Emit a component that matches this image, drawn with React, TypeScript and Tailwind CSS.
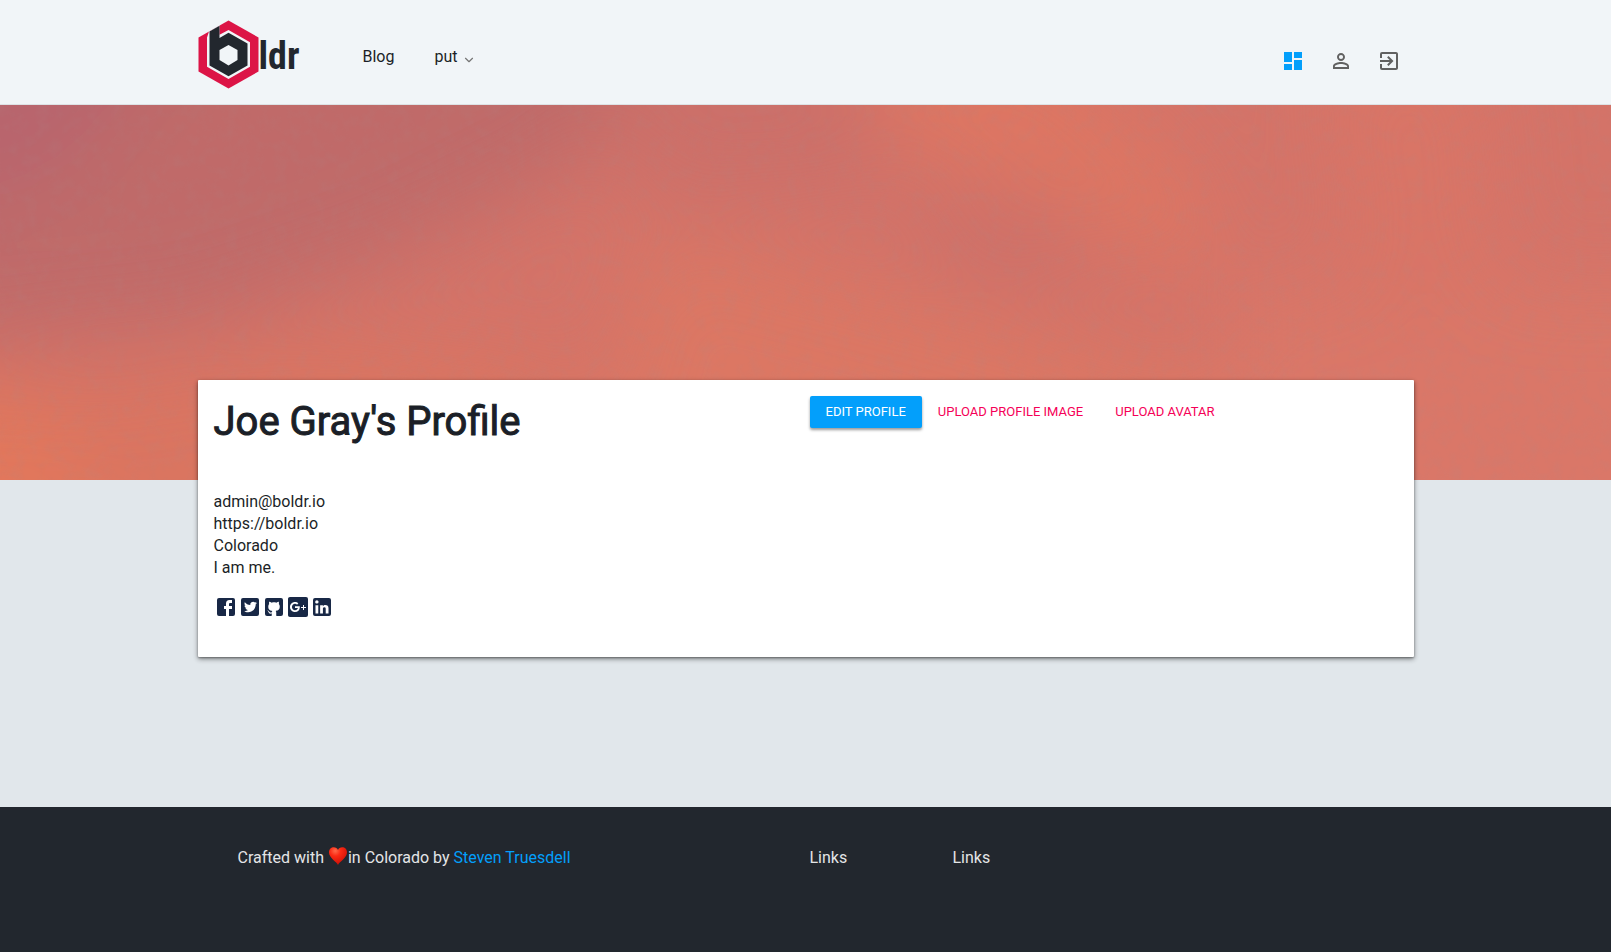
import React from 'react';
import { MdDashboard, MdPersonOutline, MdExitToApp } from 'react-icons/md';
import { ChevronDown } from 'lucide-react';

const socials = [
  {
    name: 'Facebook',
    href: '#facebook',
    path: 'M5,3H19A2,2 0 0,1 21,5V19A2,2 0 0,1 19,21H5A2,2 0 0,1 3,19V5A2,2 0 0,1 5,3M18,5H15.5A3.5,3.5 0 0,0 12,8.5V11H10V14H12V21H15V14H18V11H15V9A1,1 0 0,1 16,8H18V5Z',
  },
  {
    name: 'Twitter',
    href: '#twitter',
    path: 'M17.71,9.33C17.64,13.95 14.69,17.11 10.28,17.31C8.46,17.39 7.15,16.81 6,16.08C7.34,16.29 9,15.76 9.9,15C8.58,14.86 7.81,14.19 7.44,13.12C7.82,13.18 8.22,13.16 8.58,13.09C7.39,12.69 6.54,11.95 6.5,10.41C6.83,10.57 7.18,10.71 7.64,10.74C6.75,10.23 6.1,8.38 6.85,7.16C8.17,8.61 9.76,9.79 12.37,9.95C11.71,7.15 15.42,5.63 16.97,7.5C17.62,7.38 18.16,7.14 18.68,6.86C18.47,7.5 18.06,7.97 17.56,8.33C18.1,8.26 18.59,8.13 19,7.92C18.75,8.45 18.19,8.93 17.71,9.33M5,3A2,2 0 0,0 3,5V19A2,2 0 0,0 5,21H19A2,2 0 0,0 21,19V5A2,2 0 0,0 19,3H5Z',
  },
  {
    name: 'GitHub',
    href: '#github',
    path: 'M5,3H19A2,2 0 0,1 21,5V19A2,2 0 0,1 19,21H14.56C14.24,20.93 14.23,20.32 14.23,20.11L14.24,17.64C14.24,16.8 13.95,16.25 13.63,15.97C15.64,15.75 17.74,15 17.74,11.53C17.74,10.55 17.39,9.74 16.82,9.11C16.91,8.89 17.22,7.97 16.73,6.73C16.73,6.73 15.97,6.48 14.25,7.65C13.53,7.45 12.77,7.35 12,7.35C11.24,7.35 10.46,7.45 9.75,7.65C8.03,6.48 7.27,6.73 7.27,6.73C6.78,7.97 7.09,8.89 7.18,9.11C6.61,9.74 6.26,10.55 6.26,11.53C6.26,15 8.36,15.75 10.36,15.97C10.1,16.2 9.87,16.6 9.79,17.19C9.27,17.42 7.97,17.82 7.17,16.45C7.17,16.45 6.69,15.58 5.79,15.52C5.79,15.52 4.9,15.5 5.73,16.07C5.73,16.07 6.33,16.35 6.74,17.4C6.74,17.4 7.27,19.15 9.77,18.61L9.77,20.11C9.77,20.32 9.75,20.93 9.43,21H5A2,2 0 0,1 3,19V5A2,2 0 0,1 5,3Z',
  },
  {
    name: 'Google Plus',
    href: '#google-plus',
    path: 'M20,2A2,2 0 0,1 22,4V20A2,2 0 0,1 20,22H4C2.89,22 2,21.1 2,20V4C2,2.89 2.89,2 4,2H20M20,12H18V10H17V12H15V13H17V15H18V13H20V12M9,11.29V13H11.86C11.71,13.71 11,15.14 9,15.14C7.29,15.14 5.93,13.71 5.93,12C5.93,10.29 7.29,8.86 9,8.86C10,8.86 10.64,9.29 11,9.64L12.36,8.36C11.5,7.5 10.36,7 9,7C6.21,7 4,9.21 4,12C4,14.79 6.21,17 9,17C11.86,17 13.79,15 13.79,12.14C13.79,11.79 13.79,11.5 13.71,11.29H9Z',
  },
  {
    name: 'LinkedIn',
    href: '#linkedin',
    path: 'M19,3A2,2 0 0,1 21,5V19A2,2 0 0,1 19,21H5A2,2 0 0,1 3,19V5A2,2 0 0,1 5,3H19M18.5,18.5V13.2A3.26,3.26 0 0,0 15.24,9.94C14.39,9.94 13.4,10.46 12.92,11.24V10.13H10.13V18.5H12.92V13.57C12.92,12.8 13.54,12.17 14.31,12.17A1.4,1.4 0 0,1 15.71,13.57V18.5H18.5M6.88,8.56A1.68,1.68 0 0,0 8.56,6.88C8.56,5.95 7.81,5.19 6.88,5.19A1.69,1.69 0 0,0 5.19,6.88C5.19,7.81 5.95,8.56 6.88,8.56M8.27,18.5V10.13H5.5V18.5H8.27Z',
  },
];

function Logo() {
  return (
    <a href="#home" aria-label="boldr" className="flex items-center">
      <svg viewBox="0 0 61 69" className="h-[69px] w-[61px] shrink-0" aria-hidden="true">
        <path d="M30.5 0.5 60.5 17.5V51.5L30.5 68.5 0.5 51.5V17.5Z" fill="#dc1446" />
        <path d="M30.5 10 52 22.2V46.8L30.5 59 9 46.8V17.500L11 11.500 21.500 5.300V14.800Z" fill="#f1f5f8" />
        <path d="M11.5 11.5 21.5 5.8V18L30.5 12.8 49.5 23.6V45.4L30.5 56.2 11.5 45.4Z" fill="#22272e" />
        <path d="M30.5 25 39.5 30V40L30.5 45.5 21.5 40V30Z" fill="#f1f5f8" />
      </svg>
      <span
        aria-hidden="true"
        className="pt-1 font-['Liberation_Sans_Narrow','Roboto_Condensed',Roboto,sans-serif] text-[38px] leading-[40px] font-bold text-[#22272e]"
      >
        ldr
      </span>
    </a>
  );
}

function Header() {
  return (
    <header className="border-b border-[#dde2e5] bg-[#f1f5f8]">
      <div className="mx-auto flex h-[104px] max-w-[1216px] items-center">
        <div className="w-[165px] shrink-0 pt-1">
          <Logo />
        </div>
        <nav className="flex items-center gap-10 pt-2.5 text-base leading-[22px]">
          <a href="#blog">Blog</a>
          <button type="button" className="flex items-center gap-1">
            put
            <ChevronDown className="mt-1.5 size-3.5 text-[#757575]" aria-hidden="true" />
          </button>
        </nav>
        <div className="mr-px ml-auto flex pt-[18px] text-[#616161]">
          <a href="#dashboard" aria-label="Dashboard" className="p-3 text-[#039ffb]">
            <MdDashboard className="size-6" />
          </a>
          <a href="#profile" aria-label="Profile" className="p-3">
            <MdPersonOutline className="size-6" />
          </a>
          <button type="button" aria-label="Log out" className="p-3">
            <MdExitToApp className="size-6" />
          </button>
        </div>
      </div>
    </header>
  );
}

function SunsetSky() {
  return (
    <svg viewBox="0 0 1611 375" preserveAspectRatio="none" className="block h-[375px] w-full" aria-hidden="true">
      <defs>
        <filter id="soft" x="-50%" y="-50%" width="200%" height="200%">
          <feGaussianBlur stdDeviation="42" />
        </filter>
        <filter id="grain" x="0" y="0" width="100%" height="100%">
          <feTurbulence type="fractalNoise" baseFrequency="0.08" numOctaves="3" seed="4" />
          <feColorMatrix values="0 0 0 0 0.4  0 0 0 0 0.25  0 0 0 0 0.25  1.6 0 0 0 -0.65" />
        </filter>
      </defs>
      <rect width="1611" height="375" fill="#d47368" />
      <g filter="url(#soft)">
        <path d="M-100-100H700L580 60 400 150 200 220-100 250Z" fill="#c06b69" />
        <path d="M-100-100H200L70 70-100 120Z" fill="#b8656d" />
        <path d="M600-100H840L900 90 640 100Z" fill="#cc7069" />
        <path d="M-100 270 100 275 330 240 560 260 640 480H-100Z" fill="#da7461" />
        <path d="M-100 270 50 300 130 480H-100Z" fill="#e2775b" />
        <path d="M650 130 850 180 1080 240 1250 280V480H560Z" fill="#dc7764" />
        <path d="M860-60 1040-60 1180 60 1230 160 1130 150 1040 90 900 50Z" fill="#de7662" />
        <path d="M900 80 1050 100 1110 150 1040 180 930 150Z" fill="#cc7069" />
        <path d="M1230 180H1711V480H1230Z" fill="#da7768" />
        <path d="M1320-60 1480-60 1500 180 1360 230Z" fill="#d97466" />
      </g>
      <rect width="1611" height="375" filter="url(#grain)" opacity="0.16" />
    </svg>
  );
}

function ProfileCard() {
  return (
    <section className="relative mx-auto -mt-[100px] mb-[150px] grid min-h-[277px] max-w-[1216px] grid-cols-2 gap-2 rounded-[1px] bg-white p-4 shadow-[0_2px_5px_rgba(0,0,0,0.45),0_1px_2px_rgba(0,0,0,0.3)]">
      <div>
        <h1 className="pt-0.5 text-[40px] leading-[48px] font-normal text-[#1b1f27] [-webkit-text-stroke:1px_#1b1f27]">
          Joe Gray&#39;s Profile
        </h1>
        <ul className="mt-[45px] text-base leading-[22px]">
          <li>admin@boldr.io</li>
          <li>https://boldr.io</li>
          <li>Colorado</li>
          <li>I am me.</li>
        </ul>
        <div className="mt-4 flex text-[#182846]">
          {socials.map((social) => (
            <a key={social.name} href={social.href} aria-label={social.name}>
              <svg viewBox="0 0 24 24" className="block size-6" fill="currentColor" aria-hidden="true">
                <path d={social.path} />
              </svg>
            </a>
          ))}
        </div>
      </div>
      <div className="flex items-start text-[13px] leading-8 text-[#f50057]">
        <button
          type="button"
          className="rounded-[2px] bg-[#039ffb] px-4 text-white shadow-[0_2px_3px_rgba(0,0,0,0.4)]"
        >
          EDIT PROFILE
        </button>
        <button type="button" className="px-4">
          UPLOAD PROFILE IMAGE
        </button>
        <button type="button" className="px-4">
          UPLOAD AVATAR
        </button>
      </div>
    </section>
  );
}

function Heart() {
  return (
    <svg viewBox="-1 -1 20 20" className="-mt-1.5 inline-block size-5" role="img" aria-label="love">
      <defs>
        <radialGradient id="heart" cx="0.35" cy="0.2" r="0.85">
          <stop offset="0" stopColor="#ff6a4a" />
          <stop offset="0.35" stopColor="#fb2a14" />
          <stop offset="1" stopColor="#c80d05" />
        </radialGradient>
      </defs>
      <path
        d="M9 18C8 15 0 11 0 5.5C0 2.2 2.2 0.3 4.8 0.3C6.7 0.3 8.3 1.4 9 3C9.7 1.4 11.3 0.3 13.2 0.3C15.8 0.3 18 2.2 18 5.5C18 11 10 15 9 18Z"
        fill="url(#heart)"
      />
    </svg>
  );
}

function Footer() {
  return (
    <footer className="flex-1 bg-[#22272e] text-base leading-[22px] text-[#e4e5e7]">
      <div className="mx-auto grid max-w-[1216px] grid-cols-8 gap-2 px-10 py-10">
        <p className="col-span-4">
          Crafted with <Heart />
          in Colorado by{' '}
          <a href="#author" className="text-[#039ffb]">
            Steven Truesdell
          </a>
        </p>
        <p>Links</p>
        <p className="col-span-3">Links</p>
      </div>
    </footer>
  );
}

export default function App() {
  return (
    <div className="flex min-h-screen flex-col bg-[#e1e7eb] font-[Roboto,sans-serif] text-[#1b1f27]">
      <Header />
      <main>
        <SunsetSky />
        <ProfileCard />
      </main>
      <Footer />
    </div>
  );
}
